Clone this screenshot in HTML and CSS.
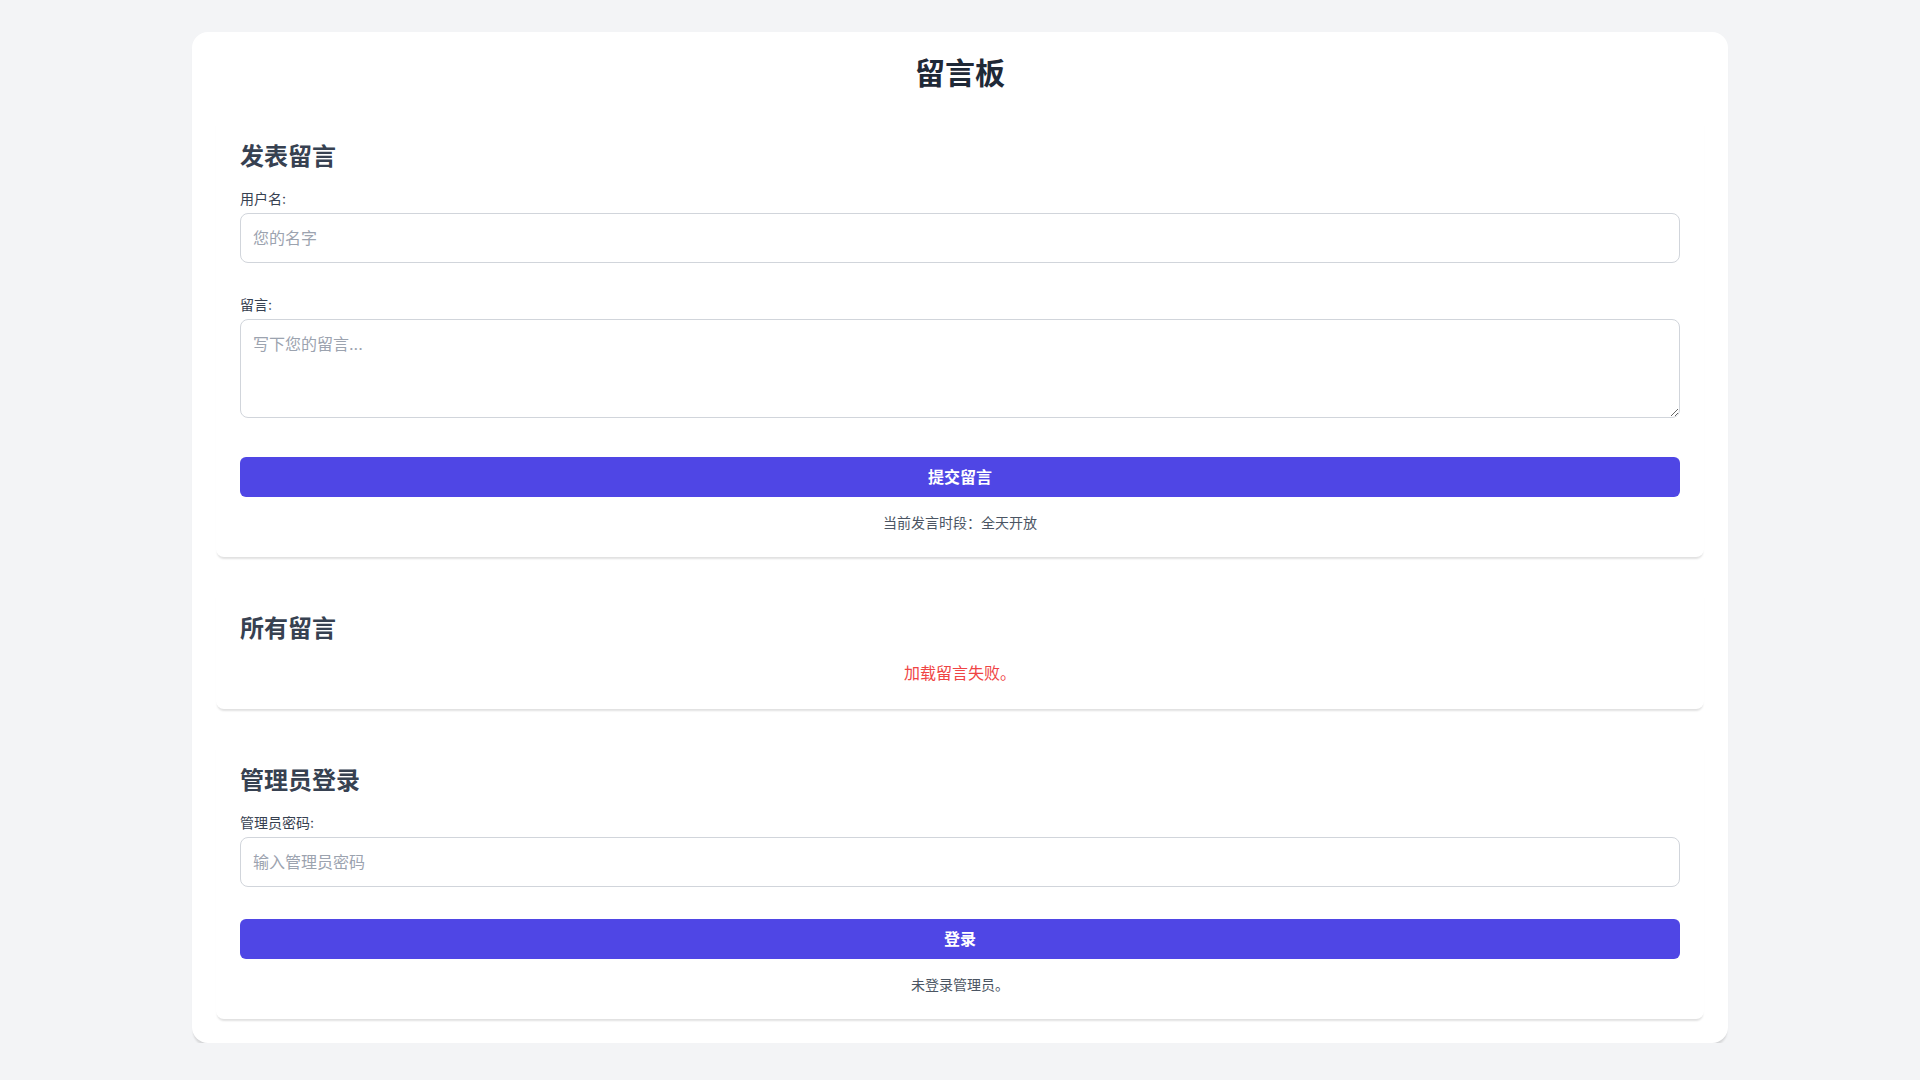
FILE: index.html
```html
<!DOCTYPE html>
<html lang="zh-CN">
<head>
<meta charset="utf-8">
<title>留言板</title>
<link rel="stylesheet" href="styles.css">
</head>
<body>
<div class="card">
  <h1 class="title">留言板</h1>

  <section class="panel">
    <h2 class="panel-title">发表留言</h2>
    <div class="group">
      <label class="label" for="username">用户名:</label>
      <input class="field" id="username" type="text" placeholder="您的名字">
    </div>
    <div class="group group-area">
      <label class="label" for="message">留言:</label>
      <textarea class="field area" id="message" rows="3" placeholder="写下您的留言..."></textarea>
    </div>
    <button class="btn" type="button">提交留言</button>
    <p class="note">当前发言时段：全天开放</p>
  </section>

  <section class="panel">
    <h2 class="panel-title">所有留言</h2>
    <p class="error">加载留言失败。</p>
  </section>

  <section class="panel">
    <h2 class="panel-title">管理员登录</h2>
    <div class="group">
      <label class="label" for="pwd">管理员密码:</label>
      <input class="field" id="pwd" type="password" placeholder="输入管理员密码">
    </div>
    <button class="btn" type="button">登录</button>
    <p class="note">未登录管理员。</p>
  </section>
</div>
</body>
</html>
```

FILE: styles.css
```css
* {
  box-sizing: border-box;
}

html, body {
  margin: 0;
  padding: 0;
}

body {
  background: #f3f4f6;
  font-family: "Inter", "Noto Sans CJK SC", "Noto Sans", sans-serif;
  color: #374151;
  padding-top: 32px;
}

.card {
  width: 1536px;
  margin: 0 auto;
  background: #ffffff;
  border-radius: 16px;
  padding: 24px;
  box-shadow: 0 4px 2px -1px rgba(0, 0, 0, 0.12);
}

.title {
  margin: 0 0 27px;
  font-size: 30px;
  line-height: 34px;
  font-weight: 700;
  color: #1f2937;
  text-align: center;
}

.panel {
  background: #ffffff;
  border-radius: 8px;
  padding: 24px;
  margin-bottom: 32px;
  box-shadow: 0 3px 2px -1px rgba(0, 0, 0, 0.12);
}

.panel:last-child {
  margin-bottom: 0;
}

.panel-title {
  margin: 0 0 16px;
  font-size: 24px;
  line-height: 32px;
  font-weight: 700;
  color: #374151;
}

.group {
  margin-bottom: 32px;
}

.group-area {
  margin-bottom: 39px;
}

.label {
  display: block;
  margin-bottom: 4px;
  font-size: 14px;
  line-height: 20px;
  font-weight: 400;
  color: #374151;
}

.field {
  display: block;
  width: 100%;
  padding: 12px;
  border: 1px solid #d1d5db;
  border-radius: 8px;
  font-family: inherit;
  font-size: 16px;
  line-height: 24px;
  color: #374151;
  background: #ffffff;
  outline: none;
}

.field::placeholder {
  color: #9ca3af;
}

.area {
  height: 99px;
  resize: vertical;
}

.btn {
  display: block;
  width: 100%;
  padding: 8px 16px;
  border: none;
  border-radius: 6px;
  background: #4f46e5;
  color: #ffffff;
  font-family: inherit;
  font-size: 16px;
  line-height: 24px;
  font-weight: 700;
  cursor: pointer;
}

.note {
  margin: 16px 0 0;
  font-size: 14px;
  line-height: 20px;
  color: #4b5563;
  text-align: center;
}

.error {
  margin: 0;
  font-size: 16px;
  line-height: 24px;
  color: #ef4444;
  text-align: center;
}
```
